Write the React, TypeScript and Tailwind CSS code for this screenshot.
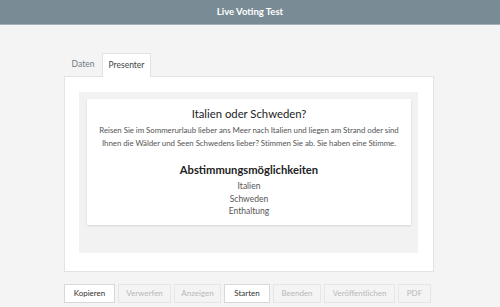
const buttons = [
  { label: "Kopieren", enabled: true, w: "w-[51px]" },
  { label: "Verwerfen", enabled: false, w: "w-[53px]" },
  { label: "Anzeigen", enabled: false, w: "w-[47px]" },
  { label: "Starten", enabled: true, w: "w-[46px]" },
  { label: "Beenden", enabled: false, w: "w-[48px]" },
  { label: "Veröffentlichen", enabled: false, w: "w-[71px]" },
  { label: "PDF", enabled: false, w: "w-[33px]" },
];

const options = ["Italien", "Schweden", "Enthaltung"];

export default function App() {
  return (
    <div
      className="h-[307px] w-[500px] overflow-hidden bg-[#f4f4f4] text-[#444]"
      style={{ fontFamily: "Lato, 'Open Sans', sans-serif" }}
    >
      {/* Kopfzeile */}
      <div className="flex h-[25px] items-center justify-center border-b border-[#a3b0b7] bg-[#798c96]">
        <span className="text-[9.5px] font-bold text-white">Live Voting Test</span>
      </div>

      <div className="ml-[64px] w-[370px] pt-[27px]">
        {/* Tabs */}
        <div className="flex h-[24px] items-end">
          <div className="flex h-[23px] w-[38px] items-center justify-center text-[8.5px] text-[#6b7a84]">
            Daten
          </div>
          <div className="relative top-[1px] flex h-[24px] w-[49px] items-center justify-center border border-b-0 border-[#e3e3e3] bg-white text-[8.5px] text-[#444]">
            Presenter
          </div>
        </div>

        {/* Panel */}
        <div className="border border-[#e3e3e3] bg-white pb-[18px] pl-[14px] pr-[15px] pt-[15px]">
          <div className="bg-[#f2f2f2] pb-[28px] pl-[8px] pr-[7px] pt-[7px]">
            <div className="flex flex-col items-center bg-white pb-[7px] pt-[7px] shadow-[0_1px_2px_rgba(0,0,0,0.12)]">
              <div className="text-[11.3px] leading-[16px] text-[#222]">Italien oder Schweden?</div>
              <p className="mt-[2px] whitespace-nowrap text-center text-[7.9px] leading-[13px] tracking-[-0.05px] text-[#555]">
                Reisen Sie im Sommerurlaub lieber ans Meer nach Italien und liegen am Strand oder sind
                <br />
                Ihnen die Wälder und Seen Schwedens lieber? Stimmen Sie ab. Sie haben eine Stimme.
              </p>
              <div className="mt-[12px] text-[11.2px] font-bold leading-[16px] text-[#222]">
                Abstimmungsmöglichkeiten
              </div>
              <div className="mt-[2px] flex flex-col items-center">
                {options.map((o) => (
                  <div key={o} className="text-[8.5px] leading-[12.5px] text-[#555]">
                    {o}
                  </div>
                ))}
              </div>
            </div>
          </div>
        </div>

        {/* Buttons */}
        <div className="mt-[12px] flex gap-[3px]">
          {buttons.map((b) => (
            <button
              key={b.label}
              className={`flex h-[19px] ${b.w} items-center justify-center border text-[8px] ${
                b.enabled
                  ? "border-[#d8d8d8] bg-white text-[#333]"
                  : "border-[#e6e6e6] bg-[#f4f4f4] text-[#b8b8b8]"
              }`}
            >
              {b.label}
            </button>
          ))}
        </div>
      </div>
    </div>
  );
}
